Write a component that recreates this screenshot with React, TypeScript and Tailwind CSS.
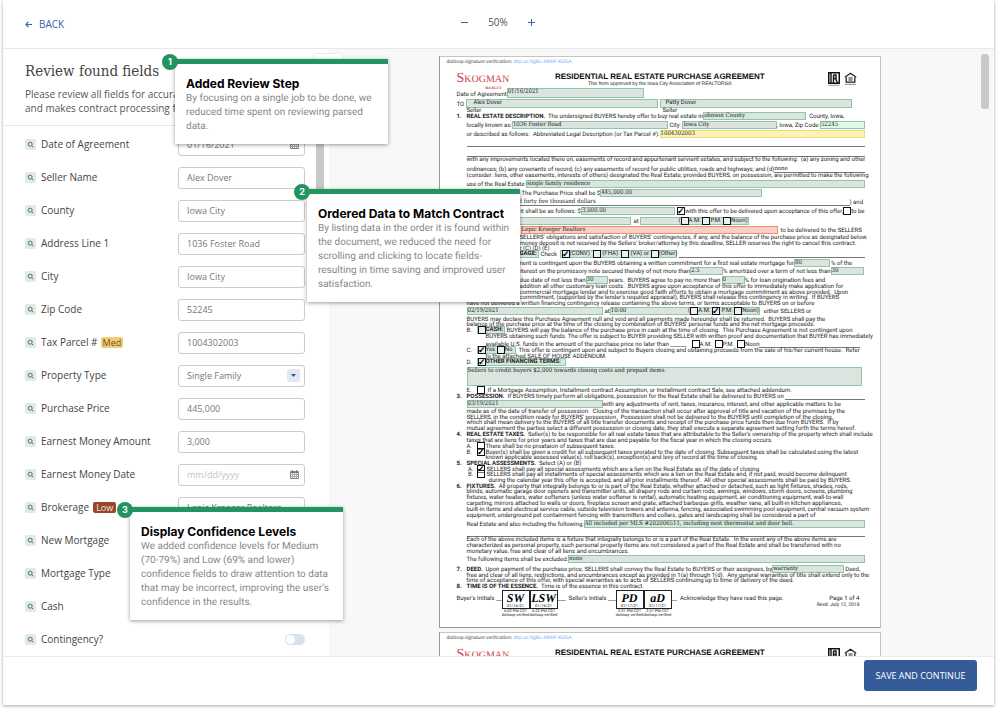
import React from "react";

const SANS = "font-['Open_Sans','Noto_Sans',sans-serif]";

/* ---------- Contract document ---------- */

type Kids = { children?: React.ReactNode };

function Line({ h = "h-[6px]", n, children }: Kids & { h?: string; n?: string }) {
  return (
    <div className={`flex items-end whitespace-pre ${h}`}>
      {n !== undefined && <b className="w-[10px] shrink-0">{n}</b>}
      {children}
    </div>
  );
}

function Txt({ w = "", children }: Kids & { w?: string }) {
  return <span className={`shrink-0 ${w}`}>{children}</span>;
}

const TONES = {
  green: "border-[#8fc6a5] bg-[#dbe4df]",
  mint: "border-[#8fc6a5] bg-[#dffbe8]",
  yellow: "border-[#f0d97a] bg-[#fdf2b8]",
  red: "border-[#ee8c76] bg-[#f9cfc6]",
};

function Found({
  w = "",
  h = "h-[8px]",
  tone = "green",
  plain = false,
  children,
}: Kids & { w?: string; h?: string; tone?: keyof typeof TONES; plain?: boolean }) {
  const font = plain ? "" : "font-['DejaVu_Serif_Condensed','DejaVu_Serif',serif]";
  return (
    <mark className={`flex items-start border leading-[6px] text-[#222] ${TONES[tone]} ${font} ${w} ${h}`}>
      {children}
    </mark>
  );
}

function Tick({ label, on = false }: { label: string; on?: boolean }) {
  return (
    <input
      type="checkbox"
      aria-label={label}
      defaultChecked={on}
      className="-mt-[1px] flex size-[8px] shrink-0 appearance-none items-center justify-center border border-[#111] bg-white/40 checked:before:text-[9px] checked:before:leading-[6px] checked:before:font-bold checked:before:text-black checked:before:content-['✓']"
    />
  );
}

function Rule({ h }: { h: string }) {
  return <div className={`ml-[10px] border-b border-[#777] ${h}`} />;
}

function RealtorMark() {
  return (
    <svg width="12" height="14" viewBox="0 0 12 14" aria-label="Realtor">
      <rect x="0.750" y="0.750" width="10.500" height="10.500" fill="#fff" stroke="#111" strokeWidth="1.500" />
      <path d="M3 1v10M5.500 3v8M5.500 3H8v3.500H5.500M7.500 6.500 9.500 11" fill="none" stroke="#111" strokeWidth="1.400" />
      <path d="M0.500 13.300h11" stroke="#999" />
    </svg>
  );
}

function HousingMark() {
  return (
    <svg width="13" height="13" viewBox="0 0 13 13" aria-label="Equal housing">
      <path d="M0.800 5.300 6.500 1.200l5.700 4.100M2.200 5.500v4.700h8.600V5.500" fill="none" stroke="#222" strokeWidth="1.300" />
      <path d="M4.500 6h4M4.500 8h4" stroke="#222" strokeWidth="1.100" />
      <path d="M1 12.300h11" stroke="#888" />
    </svg>
  );
}

function PageHead() {
  return (
    <>
      <div className="-ml-[10px] flex h-[8px] items-end font-['Lato',sans-serif] text-[5px] whitespace-pre text-[#444]">
        <span>dotloop signature verification: </span>
        <a href="#verify" className="text-[#6db3f5]">dtlp.us/bgRo-JW6P-XUGA</a>
      </div>
      <div className="flex h-[24px] items-start justify-between pt-[7px]">
        <div className="flex w-[99px] flex-col font-['Liberation_Serif',serif] text-[#c9444b]">
          <span className="text-[10px] leading-[13px]">
            <span className="text-[14px]">S</span>KOGMAN
          </span>
          <span className="pl-[29px] text-[4px] leading-[4px] font-bold">REALTY</span>
        </div>
        <div className="flex flex-1 flex-col pt-[1px] text-center font-['Liberation_Sans',sans-serif]">
          <strong className="text-[8px] leading-[8px] whitespace-nowrap text-[#111]">RESIDENTIAL REAL ESTATE PURCHASE AGREEMENT</strong>
          <span className="text-[5px] leading-[6px]">This form approved by the Iowa City Association of REALTORS®</span>
        </div>
        <div className="flex w-[100px] items-start gap-[4px] pl-[63px]">
          <RealtorMark />
          <HousingMark />
        </div>
      </div>
    </>
  );
}

function Initials({ name, time }: { name: string; time: string }) {
  return (
    <div className="flex w-[28px] flex-col items-center text-[4px] leading-[4px]">
      <div className="flex h-[19px] w-full flex-col items-center justify-end border border-[#222]">
        <i className="font-['Liberation_Serif',serif] text-[12px] leading-[12px] font-bold text-black">{name}</i>
        <span>{time.slice(0, 8)}</span>
      </div>
      <span>{time.slice(9)}</span>
      <span>dotloop verified</span>
    </div>
  );
}

function ContractPage({ children }: Kids) {
  return (
    <article className="w-[442px] shrink-0 border border-[#c4c4c4] border-b-[#999] border-l-[#999] bg-white pr-[15px] pl-[17px] font-['Roboto','Liberation_Sans',sans-serif] text-[6px] leading-[6px] text-[#222] [text-rendering:geometricPrecision]">
      {children}
    </article>
  );
}

function Contract() {
  return (
    <ContractPage>
      <PageHead />
      <Line h="h-[9px]">
        <Txt w="min-w-[49px]">Date of Agreement</Txt>
        <Found w="w-[137px]" h="h-[10px]">01/16/2021</Found>
      </Line>
      <Line h="h-[10px]">
        <Txt w="min-w-[9px]">TO</Txt>
        <Found w="w-[192px] mr-[2px] pl-[7px]" h="h-[9px]" plain>Alex Dover</Found>
        <Found w="w-[192px] pl-[5px]" h="h-[9px]" plain>Patty Dover</Found>
      </Line>
      <Line n="">
        <Txt w="min-w-[196px]">Seller</Txt>
        <Txt>Seller</Txt>
      </Line>
      <Line n="1.">
        <Txt w="min-w-[236px]"><b>REAL ESTATE DESCRIPTION.</b>  The undersigned BUYERS hereby offer to buy real estate in</Txt>
        <Found w="w-[103px] mr-[3px]">ohnson County</Found>
        <Txt>County, Iowa,</Txt>
      </Line>
      <Line h="h-[9px]" n="">
        <Txt w="min-w-[45px]">locally known as:</Txt>
        <Found w="w-[158px] mr-[1px]">1036 Foster Road</Found>
        <Txt w="min-w-[13px]">City:</Txt>
        <Found w="w-[95px]">Iowa City</Found>
        <Txt w="min-w-[42px]">, Iowa, Zip Code:</Txt>
        <Found w="w-[45px]" tone="mint">52245</Found>
      </Line>
      <Line h="h-[9px]" n="">
        <Txt w="min-w-[184px]">or described as follows:  Abbreviated Legal Description (or Tax Parcel #):</Txt>
        <Found w="w-[215px]" tone="yellow">1004302003</Found>
      </Line>
      <Rule h="h-[9px]" />
      <Rule h="h-[10px]" />
      <Line n="">with any improvements located there on, easements of record and appurtenant servient estates, and subject to the following:  (a) any zoning and other</Line>
      <Line h="h-[10px]" n="">
        <Txt w="min-w-[294px]">ordinances; (b) any covenants of record; (c) any easements of record for public utilities, roads and highways; and (d)</Txt>
        <span className="flex-1 border-b border-[#777] font-['DejaVu_Serif_Condensed','DejaVu_Serif',serif]">none</span>
      </Line>
      <Line n="">(consider: liens, other easements, interests of others) designated the Real Estate; provided BUYERS, on possession, are permitted to make the following</Line>
      <Line h="h-[9px]" n="">
        <Txt w="min-w-[58px]">use of the Real Estate:</Txt>
        <Found w="w-[341px]">single family residence</Found>
      </Line>
      <Line h="h-[9px]">
        <Txt w="min-w-[142px] pl-[65px]">The Purchase Price shall be $</Txt>
        <Found w="w-[162px]">445,000.00</Found>
      </Line>
      <Line h="h-[9px]">
        <span className="ml-[62px] w-[331px] border-b border-[#777] font-['DejaVu_Serif_Condensed','DejaVu_Serif',serif]">d forty five thousand dollars</span>
        <Txt>) and</Txt>
      </Line>
      <Line h="h-[9px]">
        <Txt w="min-w-[122px] pl-[62px]">nt shall be as follows: $</Txt>
        <Found w="w-[98px] mr-[2px]">3,000.00</Found>
        <Tick label="With this offer" on />
        <Txt w="min-w-[150px]">with this offer to be delivered upon acceptance of this offer,</Txt>
        <Tick label="To be delivered" />
        <Txt>to be</Txt>
      </Line>
      <Line h="h-[10px]">
        <Found w="w-[112px] ml-[62px] mr-[3px]" />
        <Txt w="min-w-[6px]">at</Txt>
        <Found w="w-[109px] pl-[38px]" plain>
          (<Tick label="Deposit A.M." />A.M. <Tick label="Deposit P.M." />P.M. <Tick label="Deposit noon" />Noon)
        </Found>
      </Line>
      <Line h="h-[9px]">
        <Found w="w-[257px] ml-[64px] mr-[3px]" tone="red">Lepic Kroeger Realtors</Found>
        <Txt>to be delivered to the SELLERS</Txt>
      </Line>
      <Line h="h-[7px]"><Txt w="pl-[63px]">SELLERS' obligations and satisfaction of BUYERS' contingencies, if any, and the balance of the purchase price as designated below.</Txt></Line>
      <Line><Txt w="pl-[63px]">money deposit is not received by the Sellers' broker/attorney by this deadline, SELLER reserves the right to cancel this contract.</Txt></Line>
      <Line h="h-[5px]"><Txt w="pl-[63px]">r (C) (D) (E)</Txt></Line>
      <Line>
        <Found w="w-[26px] ml-[56px] pl-[6px] mr-[2px]" plain><b>GAGE:</b></Found>
        <Txt w="min-w-[19px]">Check</Txt>
        <Found w="w-[117px] pl-[1px] mr-[2px]" plain>
          <Tick label="Conventional" on />(CONV)  <Tick label="FHA" /> (FHA)  <Tick label="VA" /> (VA) or <Tick label="Other" />(Other)
        </Found>
        <span className="flex-1 border-b border-[#777]" />
      </Line>
      <Line h="h-[9px]">
        <Txt w="min-w-[328px] pl-[61px]">ment is contingent upon the BUYERS obtaining a written commitment for a first real estate mortgage for</Txt>
        <Found w="w-[36px] mr-[1px]">80</Found>
        <Txt>% of the</Txt>
      </Line>
      <Line h="h-[8px]">
        <Txt w="min-w-[227px] pl-[62px]">nterest on the promissory note secured thereby of not more than</Txt>
        <Found w="w-[33px]">2.5</Found>
        <Txt w="min-w-[104px]">% amortized over a term of not less than</Txt>
        <Found w="w-[33px]">30</Found>
      </Line>
      <Line h="h-[9px]">
        <Txt w="min-w-[128px] pl-[63px]">due date of not less than</Txt>
        <Found w="w-[22px] mr-[1px]">30</Found>
        <Txt w="min-w-[113px]">years.  BUYERS agree to pay no more than</Txt>
        <Found w="w-[23px]">0</Found>
        <Txt>% for loan origination fees and</Txt>
      </Line>
      <Line><Txt w="pl-[63px]">addition all other customary loan costs.  BUYERS agree upon acceptance of this offer to immediately make application for</Txt></Line>
      <Line><Txt w="pl-[63px]">commercial mortgage lender and to exercise good faith efforts to obtain a mortgage commitment as above provided.  Upon</Txt></Line>
      <Line h="h-[5px]"><Txt w="pl-[63px]">commitment, (supported by the lender's required appraisal), BUYERS shall release this contingency in writing.  If BUYERS</Txt></Line>
      <Line n="">have not delivered a written financing contingency release containing the above terms, or terms acceptable to BUYERS on or before</Line>
      <Line h="h-[8px]" n="">
        <Found w="w-[136px] mr-[2px]">02/19/2021</Found>
        <Txt w="min-w-[5px]">at</Txt>
        <Found w="w-[150px] mr-[4px] justify-between">
          10:00
          <span className="flex font-['Roboto',sans-serif]">
            (<Tick label="Release A.M." />A.M. <Tick label="Release P.M." on /> P.M. <Tick label="Release noon" />Noon)
          </span>
        </Found>
        <Txt>either SELLERS or</Txt>
      </Line>
      <Line h="h-[8px]" n="">BUYERS may declare this Purchase Agreement null and void and all payments made hereunder shall be returned.  BUYERS shall pay the</Line>
      <Line h="h-[5px]" n="">balance of the purchase price at the time of the closing by combination of BUYERS' personal funds and the net mortgage proceeds.</Line>
      <Line n="">
        <Txt w="min-w-[10px]">B.</Txt>
        <Found w="min-w-[28px] mr-[2px]" plain><Tick label="Cash" /><b>CASH:</b></Found>
        <Txt>BUYERS will pay the balance of the purchase price in cash at the time of closing.  This Purchase Agreement is not contingent upon</Txt>
      </Line>
      <Line><Txt w="pl-[29px]">BUYERS obtaining such funds. The offer is subject to BUYER providing SELLER with written proof and documentation that BUYER has immediately</Txt></Line>
      <Line h="h-[8px]">
        <Txt w="min-w-[235px] pl-[29px]">available U.S. funds in the amount of the purchase price no later than ______</Txt>
        <Tick label="Funds A.M." />A.M.  <Tick label="Funds P.M." />P.M.  <Tick label="Funds noon" />Noon
        <span className="mr-[5px] flex-1 border-b border-[#777]" />
      </Line>
      <Line n="">
        <Txt w="min-w-[10px]">C.</Txt>
        <Found w="min-w-[39px] mr-[3px]" plain><Tick label="Contingent: yes" on />Yes <Tick label="Contingent: no" />No</Found>
        <Txt>This offer is contingent upon and subject to Buyers closing and obtaining proceeds from the sale of his/her current house.  Refer</Txt>
      </Line>
      <Line><Txt w="pl-[29px]">to the attached SALE OF HOUSE ADDENDUM.</Txt></Line>
      <Line n="">
        <Txt w="min-w-[10px]">D.</Txt>
        <Found w="min-w-[89px]" plain><Tick label="Other financing" on /><b>OTHER FINANCING TERMS:</b></Found>
      </Line>
      <Line h="h-[20px]" n="">
        <Found w="w-[395px]" h="h-[19px]">Sellers to credit buyers $2,000 towards closing costs and prepaid items.</Found>
      </Line>
      <Line h="h-[8px]" n="">
        <Txt w="min-w-[10px]">E.</Txt>
        <Tick label="Mortgage assumption" />
        <Txt w="pl-[3px]">If a Mortgage Assumption, Installment contract Assumption, or Installment contract Sale, see attached addendum.</Txt>
      </Line>
      <Line n="3.">
        <Txt><b>POSSESSION.</b>  If BUYERS timely perform all obligations, possession for the Real Estate shall be delivered to BUYERS on </Txt>
        <span className="flex-1 border-b border-[#777]" />
      </Line>
      <Line h="h-[8px]" n="">
        <Found w="w-[136px]">03/19/2021</Found>
        <Txt>with any adjustments of rent, taxes, insurance, interest, and other applicable matters to be</Txt>
      </Line>
      <Line h="h-[7px]" n="">made as of the date of transfer of possession.  Closing of the transaction shall occur after approval of title and vacation of the premises by the</Line>
      <Line n="">SELLERS, in the condition ready for BUYERS' possession.  Possession shall not be delivered to the BUYERS until completion of the closing,</Line>
      <Line h="h-[5px]" n="">which shall mean delivery to the BUYERS of all title transfer documents and receipt of the purchase price funds then due from BUYERS.  If by</Line>
      <Line n="">mutual agreement the parties select a different possession or closing date, they shall execute a separate agreement setting forth the terms hereof.</Line>
      <Line n="4."><Txt><b>REAL ESTATE TAXES.</b>  Seller(s) to be responsible for all real estate taxes that are attributable to the Seller's ownership of the property which shall include</Txt></Line>
      <Line n="">taxes that are liens for prior years and taxes that are due and payable for the fiscal year in which the closing occurs.</Line>
      <Line n="">
        <Txt w="min-w-[10px]">A.</Txt>
        <Tick label="No proration" />
        <Txt w="pl-[1px]">There shall be no proataion of subsequent taxes.</Txt>
      </Line>
      <Line n="">
        <Txt w="min-w-[10px]">B.</Txt>
        <Tick label="Tax credit" on />
        <Txt w="pl-[1px]">Buyer(s) shall be given a credit for all subsequent taxes prorated to the date of closing. Subsequent taxes shall be calculated using the latest</Txt>
      </Line>
      <Line h="h-[5px]"><Txt w="pl-[29px]">known applicable assessed value(s), roll back(s), exception(s) and levy of record at the time of closing.</Txt></Line>
      <Line n="5."><Txt><b>SPECIAL ASSESSMENTS.</b>  Select (A) or (B)</Txt></Line>
      <Line n="">
        <Txt w="min-w-[10px]"> A.</Txt>
        <Tick label="Lien as of closing" on />
        <Txt w="pl-[2px]">SELLERS shall pay all special assessments which are a lien on the Real Estate as of the date of closing.</Txt>
      </Line>
      <Line h="h-[5px]" n="">
        <Txt w="min-w-[10px]"> B.</Txt>
        <Tick label="Installments" />
        <Txt w="pl-[2px]">SELLERS shall pay all installments of special assessments which are a lien on the Real Estate and, if not paid, would become delinquent</Txt>
      </Line>
      <Line><Txt w="pl-[32px]">during the calendar year this offer is accepted, and all prior installments thereof.  All other special assessments shall be paid by BUYERS.</Txt></Line>
      <Line n="6."><Txt><b>FIXTURES.</b>  All property that integrally belongs to or is part of the Real Estate, whether attached or detached, such as light fixtures, shades, rods,</Txt></Line>
      <Line h="h-[5px]" n="">blinds, automatic garage door openers and transmitter units, all drapery rods and curtain rods, awnings, windows, storm doors, screens, plumbing</Line>
      <Line n="">fixtures, water heaters, water softeners (unless water softener is rental), automatic heating equipment, air conditioning equipment, wall-to-wall</Line>
      <Line n="">carpeting, mirrors attached to walls or doors, fireplace screen and grate, attached barbeque grills, weather vane, all built-in kitchen appliances,</Line>
      <Line n="">built-in items and electrical service cable, outside television towers and antenna, fencing, associated swimming pool equipment, central vacuum system</Line>
      <Line n="">equipment, underground pet containment fencing with transmitters and collars, gates and landscaping shall be considered a part of</Line>
      <Line h="h-[9px]" n="">
        <Txt w="min-w-[115px]">Real Estate and also including the following:</Txt>
        <Found w="w-[283px]">All included per MLS #202006511, including nest thermostat and door bell.</Found>
      </Line>
      <Rule h="h-[9px]" />
      <Line n="">Each of the above included items is a fixture that integrally belongs to or is a part of the Real Estate.  In the event any of the above items are</Line>
      <Line n="">characterized as personal property, such personal property items are not considered a part of the Real Estate and shall be transferred with no</Line>
      <Line n="">monetary value, free and clear of all liens and encumbrances.</Line>
      <Line h="h-[8px]" n="">
        <Txt w="min-w-[98px]">The following items shall be excluded:</Txt>
        <Found w="w-[300px]">none</Found>
      </Line>
      <Line h="h-[10px]" n="7.">
        <Txt w="min-w-[305px]"><b>DEED.</b>  Upon payment of the purchase price, SELLERS shall convey the Real Estate to BUYERS or their assignees, by</Txt>
        <Found w="w-[72px] mr-[1px]">warranty</Found>
        <Txt>Deed,</Txt>
      </Line>
      <Line n="">free and clear of all liens, restrictions, and encumbrances except as provided in 1(a) through 1(d).  Any general warranties of title shall extend only to the</Line>
      <Line h="h-[5px]" n="">time of acceptance of this offer, with special warranties as to acts of SELLERS continuing up to time of delivery of the deed.</Line>
      <Line n="8."><Txt><b>TIME IS OF THE ESSENCE.</b>  Time is of the essence in this contract.</Txt></Line>
      <div className="flex h-[37px] items-start whitespace-pre">
        <Txt w="w-[45px] pt-[6px]">Buyer's Initials __</Txt>
        <Initials name="SW" time="01/16/21 6:02 PM CST" />
        <Initials name="LSW" time="01/16/21 6:22 PM CST" />
        <Txt w="w-[58px] pt-[6px]">___  Seller's Initials ___</Txt>
        <Initials name="PD" time="01/17/21 3:31 PM CST" />
        <Initials name="aD" time="01/17/21 2:57 PM CST" />
        <Txt w="pt-[6px]">__  Acknowledge they have read this page.</Txt>
        <div className="flex flex-1 flex-col pt-[6px] pr-[5px] text-right">
          <span>Page 1 of 4</span>
          <span className="text-[5px] leading-[6px]">Revd: July 12, 2018</span>
        </div>
      </div>
    </ContractPage>
  );
}

/* ---------- Review form ---------- */

const INPUT = "h-[22px] w-[127px] rounded-[3px] border border-[#ccc] bg-white px-[8px] text-[9px] text-[#777] outline-none placeholder:text-[#c4c4c4]";

type Item = { label: string; value?: string; kind?: "date" | "select" | "toggle"; level?: "Med" | "Low" };

const ITEMS: Item[] = [
  { label: "Date of Agreement", value: "01/16/2021", kind: "date" },
  { label: "Seller Name", value: "Alex Dover" },
  { label: "County", value: "Iowa City" },
  { label: "Address Line 1", value: "1036 Foster Road" },
  { label: "City", value: "Iowa City" },
  { label: "Zip Code", value: "52245" },
  { label: "Tax Parcel #", value: "1004302003", level: "Med" },
  { label: "Property Type", value: "Single Family", kind: "select" },
  { label: "Purchase Price", value: "445,000" },
  { label: "Earnest Money Amount", value: "3,000" },
  { label: "Earnest Money Date", value: "", kind: "date" },
  { label: "Brokerage", value: "Lepic Kroeger Realtors", level: "Low" },
  { label: "New Mortgage", kind: "toggle" },
  { label: "Mortgage Type", kind: "toggle" },
  { label: "Cash", kind: "toggle" },
  { label: "Contingency?", kind: "toggle" },
];

function CalendarIcon() {
  return (
    <svg width="9" height="9" viewBox="0 0 9 9" className="absolute right-[6px]" aria-hidden="true">
      <path d="M0.500 1.500h8v7h-8z" fill="none" stroke="#888" />
      <path d="M0.500 2.500h8M2.500 0v2M6.500 0v2" stroke="#777" />
      <path d="M0.500 4.500h8M0.500 6.500h8M2.500 3v5M4.500 3v5M6.500 3v5" stroke="#aaa" />
    </svg>
  );
}

function Control({ item, id }: { item: Item; id: string }) {
  if (item.kind === "toggle") {
    return (
      <input
        id={id}
        type="checkbox"
        role="switch"
        className="block h-[11px] w-[20px] appearance-none rounded-full bg-[#d9e0ee] p-[1px] before:block before:size-[9px] before:rounded-full before:bg-white before:content-[''] checked:bg-[#345a97]"
      />
    );
  }
  if (item.kind === "select") {
    return (
      <div className="relative flex items-center">
        <select id={id} defaultValue={item.value} className={`${INPUT} appearance-none`}>
          <option>{item.value}</option>
        </select>
        <span className="pointer-events-none absolute right-[5px] flex size-[13px] items-center justify-center rounded-[2px] bg-[#e2e8f3]">
          <svg width="5" height="3" viewBox="0 0 5 3" aria-hidden="true">
            <path d="M0 0h5L2.500 3z" fill="#2f559c" />
          </svg>
        </span>
      </div>
    );
  }
  return (
    <div className="relative flex items-center">
      <input id={id} type="text" defaultValue={item.value} placeholder={item.kind === "date" ? "mm/dd/yyyy" : undefined} className={INPUT} />
      {item.kind === "date" && <CalendarIcon />}
    </div>
  );
}

function FieldRow({ item, index }: { item: Item; index: number }) {
  const id = `field-${index}`;
  return (
    <div className="flex h-[33px] shrink-0 items-center">
      <button
        type="button"
        aria-label={`Find ${item.label} in document`}
        className="mr-[5px] flex size-[11px] items-center justify-center rounded-[2px] bg-[#dfebe4]"
      >
        <svg width="7" height="7" viewBox="0 0 7 7" fill="none" stroke="#54705f" aria-hidden="true">
          <circle cx="3.200" cy="3.200" r="2" />
          <path d="M4.600 4.600 6.300 6.300" />
        </svg>
      </button>
      <label htmlFor={id} className="text-[10px] font-medium text-[#444]">{item.label}</label>
      {item.level === "Med" && (
        <span className="ml-[3px] h-[11px] rounded-[2px] bg-[#f5cd79] px-[2px] text-[9px] leading-[11px] font-medium text-[#6b5220]">Med</span>
      )}
      {item.level === "Low" && (
        <span className="ml-[4px] h-[11px] rounded-[2px] bg-[#98472f] px-[3px] text-[9px] leading-[11px] text-[#f8e6df]">Low</span>
      )}
      <div className="ml-auto">
        <Control item={item} id={id} />
      </div>
    </div>
  );
}

/* ---------- Callouts ---------- */

function Callout({ n, place, title, children }: Kids & { n: number; place: string; title: string }) {
  return (
    <aside className={`absolute w-[213px] border-t-[5px] border-[#23945f] bg-white px-[11px] pt-[12px] pb-[10px] font-['Inter',sans-serif] shadow-[0_1px_4px_rgba(0,0,0,0.4)] ${place}`}>
      <span className="absolute -top-[10px] -left-[13px] flex size-[16px] items-center justify-center rounded-full bg-[#23945f] text-[9px] font-bold text-white">{n}</span>
      <h2 className="text-[12px] leading-[16px] font-bold whitespace-nowrap text-black">{title}</h2>
      <p className="font-['Roboto','Inter',sans-serif] text-[10px] leading-[14px] whitespace-nowrap text-[#888] [text-rendering:geometricPrecision]">{children}</p>
    </aside>
  );
}

export default function App() {
  return (
    <div className={`relative h-screen overflow-hidden bg-white pr-[2px] pb-[5px] pl-[3px] ${SANS}`}>
      <div className="flex h-full flex-col bg-white shadow-[0_1px_3px_rgba(0,0,0,0.35)]">
        <header className="relative flex h-[49px] shrink-0 items-center justify-center border-b border-[#e8e8e8] text-[10px] font-medium">
          <a href="#back" className="absolute left-[22px] flex items-center gap-[7px] text-[#3b61a8]">
            <svg width="7" height="7" viewBox="0 0 7 7" fill="none" stroke="#3b61a8" strokeWidth="1.200" aria-hidden="true">
              <path d="M7 3.500H1M3.500 0.800 0.800 3.500l2.700 2.700" />
            </svg>
            BACK
          </a>
          <div className="flex items-center gap-[20px] pr-[1px] pb-[3px]">
            <button type="button" aria-label="Zoom out" className="h-[1px] w-[7px] bg-[#3b61a8]" />
            <span className="text-[#555]">50%</span>
            <button type="button" aria-label="Zoom in">
              <svg width="7" height="7" viewBox="0 0 7 7" stroke="#3b61a8" aria-hidden="true">
                <path d="M3.500 0v7M0 3.500h7" />
              </svg>
            </button>
          </div>
        </header>

        <main className="flex min-h-0 flex-1 overflow-hidden bg-[#f8f8f8]">
          <section className="relative flex w-[326px] shrink-0 flex-col bg-white">
            <div className="h-[77px] shrink-0 border-b border-[#e8e8e8] pt-[13px] pl-[22px]">
              <h1 className="font-['DejaVu_Serif_Condensed','DejaVu_Serif',serif] text-[15px] leading-[18px] text-[#444]">Review found fields</h1>
              <p className="pt-[7px] text-[10px] leading-[14px] whitespace-nowrap text-[#555]">
                Please review all fields for accuracy. This<br />and makes contract processing faster.
              </p>
            </div>
            <form className="flex min-h-0 flex-1 flex-col overflow-hidden pt-[2px] pr-[24px] pl-[22px]">
              {ITEMS.map((item, i) => (
                <FieldRow key={item.label} item={item} index={i} />
              ))}
            </form>
            <div className="absolute top-[82px] right-[5px] h-[120px] w-[8px] rounded-[2px] bg-[#c6c8c7]" />
            <button type="button" aria-label="Collapse panel" className="absolute top-[4px] -right-[14px] h-[20px] w-[30px] rounded-[3px] border border-[#eee] bg-white" />
          </section>

          <section className="relative flex min-w-0 flex-1 flex-col items-center gap-[4px] overflow-hidden pt-[7px] pr-[4px]">
            <Contract />
            <ContractPage>
              <PageHead />
            </ContractPage>
            <div className="absolute top-[5px] right-[5px] h-[55px] w-[8px] rounded-[3px] bg-[#c9c9c9]" />
          </section>
        </main>

        <footer className="flex h-[49px] shrink-0 items-start justify-end border-t border-[#ececec] bg-white pt-[3px] pr-[17px]">
          <button type="submit" className="h-[31px] w-[113px] rounded-[3px] bg-[#355b98] text-[9px] font-medium text-white">SAVE AND CONTINUE</button>
        </footer>
      </div>

      <Callout n={1} place="top-[59px] left-[175px]" title="Added Review Step">
        By focusing on a single job to be done, we<br />
        reduced time spent on reviewing parsed<br />
        data.
      </Callout>
      <Callout n={2} place="top-[189px] left-[307px]" title="Ordered Data to Match Contract">
        By listing data in the order it is found within<br />
        the document, we reduced the need for<br />
        scrolling and clicking to locate fields-<br />
        resulting in time saving and improved user<br />
        satisfaction.
      </Callout>
      <Callout n={3} place="top-[507px] left-[130px]" title="Display Confidence Levels">
        We added confidence levels for Medium<br />
        (70-79%) and Low (69% and lower)<br />
        confidence fields to draw attention to data<br />
        that may be incorrect, improving the user’s<br />
        confidence in the results.
      </Callout>
    </div>
  );
}
